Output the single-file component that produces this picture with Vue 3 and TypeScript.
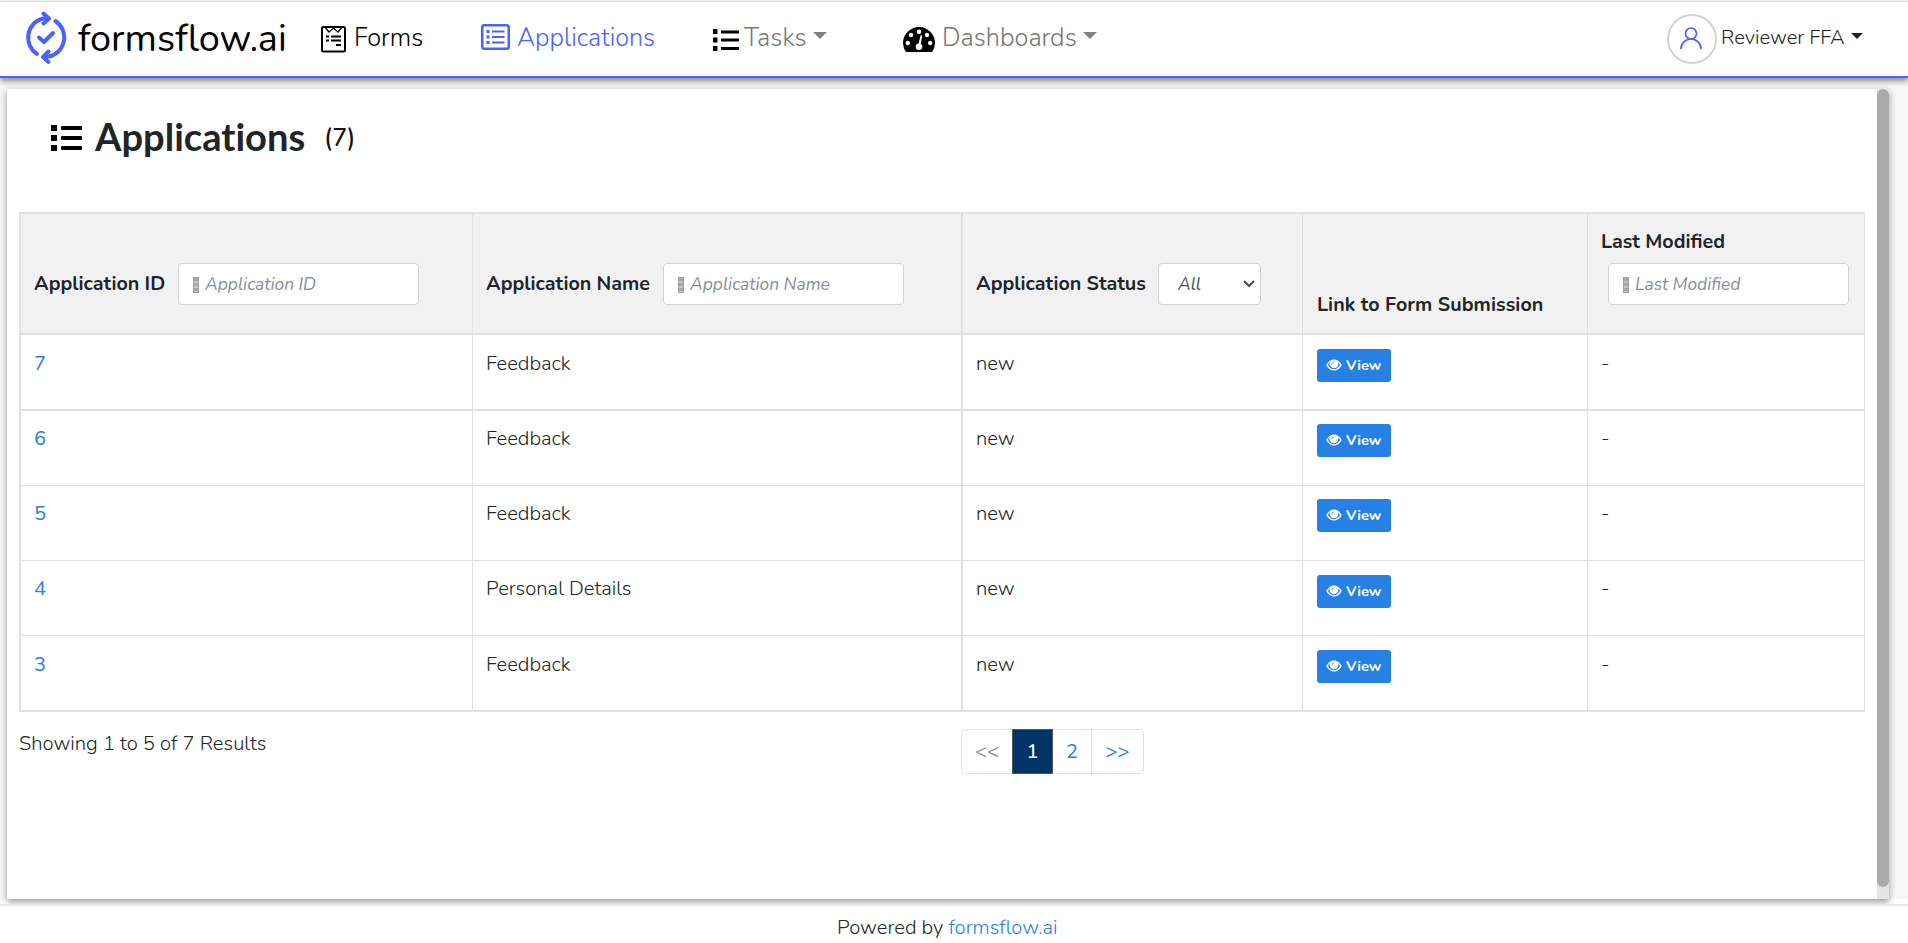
<script setup lang="ts">
interface Row {
  id: number
  name: string
  status: string
}

const rows: Row[] = [
  { id: 7, name: 'Feedback', status: 'new' },
  { id: 6, name: 'Feedback', status: 'new' },
  { id: 5, name: 'Feedback', status: 'new' },
  { id: 4, name: 'Personal Details', status: 'new' },
  { id: 3, name: 'Feedback', status: 'new' },
]
</script>

<template>
  <div class="page">
    <header class="navbar">
      <a class="brand">
        <svg class="logo" viewBox="0 0 42 54" width="42" height="54" fill="none" stroke="#4a63ff" stroke-width="4" stroke-linecap="round" stroke-linejoin="round">
          <path d="M12 43 A19 19.5 0 0 1 18 7.5 H23" />
          <path d="M18.500 2.500 L24 7.500 L18.500 12.500" />
          <path d="M30.500 10 A19 19.500 0 0 1 24 45.500 H19" />
          <path d="M23.500 40.500 L18 46 L23.500 51" />
          <path d="M14 26.500 L19 31 L28 22" />
        </svg>
        <span class="brand-text">formsflow.ai</span>
      </a>
      <nav class="menu">
        <a class="item forms">
          <svg viewBox="0 0 25 27" width="25" height="27" fill="none" stroke="#000">
            <rect x="1" y="1" width="23" height="24.500" rx="1.500" stroke-width="2" />
            <path d="M4.500 2 L8 6 L12.500 2 L17 6 L20.500 2" stroke-width="1.300" />
            <path d="M5 10.500h3M10 10.500h10M5 14.500h3M10 14.500h10M15 19h5" stroke-width="2" />
          </svg>
          <span>Forms</span>
        </a>
        <a class="item apps">
          <svg viewBox="0 0 29 26" width="29" height="26" fill="none" stroke="#4a63ff">
            <rect x="1.250" y="1.250" width="26.500" height="23.500" rx="2" stroke-width="2.500" />
            <path d="M5.500 7.500h3M5.500 13h3M5.500 18.500h3" stroke-width="3" />
            <path d="M11 7.500h12.500M11 13h12.500M11 18.500h12.500" stroke-width="2.200" />
          </svg>
          <span>Applications</span>
        </a>
        <a class="item tasks">
          <svg viewBox="0 0 26 22" width="26" height="22">
            <path d="M0 0h4.500v5H0zM0 8.500h4.500v5H0zM0 17h4.500v5H0zM8 1.500h18v3H8zM8 9.500h18v3H8zM8 18h18v3H8z" />
          </svg>
          <span>Tasks</span>
          <i class="caret" />
        </a>
        <a class="item dash">
          <svg viewBox="0 0 32 25" width="32" height="25">
            <path d="M3 25 Q0 21 0 16 A16 16 0 0 1 32 16 Q32 21 29 25Z" />
            <g fill="#fff">
              <circle cx="16" cy="4.700" r="2.200" /><circle cx="8" cy="8" r="2.200" /><circle cx="24" cy="8" r="2.200" />
              <circle cx="4.800" cy="16" r="2.200" /><circle cx="27.200" cy="16" r="2.200" /><circle cx="16" cy="19.700" r="3.300" />
              <path d="M17.700 8.300 L19.300 8.700 L17.200 19 L15 18.500Z" />
            </g>
          </svg>
          <span>Dashboards</span>
          <i class="caret" />
        </a>
      </nav>
      <a class="user">
        <span class="avatar">
          <svg viewBox="0 0 22 22" width="22" height="22" fill="none" stroke="#4a63ff" stroke-width="1.700">
            <circle cx="11" cy="6.500" r="5.500" />
            <path d="M1 22 A10 10 0 0 1 21 22" />
          </svg>
        </span>
        <span class="user-name">Reviewer FFA</span>
        <i class="caret small" />
      </a>
    </header>

    <div class="stage">
      <main class="panel">
        <section class="content">
          <div class="title">
            <svg viewBox="0 0 31 26" width="31" height="26">
              <path d="M0 0h6v6H0zM0 10h6v6H0zM0 20h6v6H0z" />
              <rect x="10" y="1" width="21" height="4" rx="1" /><rect x="10" y="11" width="21" height="4" rx="1" /><rect x="10" y="21" width="21" height="4" rx="1" />
            </svg>
            <h1>Applications</h1>
            <span class="count">(7)</span>
          </div>

          <table>
            <colgroup>
              <col class="c1"><col class="c2"><col class="c3"><col class="c4"><col class="c5">
            </colgroup>
            <thead>
              <tr>
                <th><div class="filter"><span class="t1">Application ID</span><span class="input"><i class="glyph" /><em>Application ID</em></span></div></th>
                <th><div class="filter"><span class="t2">Application Name</span><span class="input"><i class="glyph" /><em>Application Name</em></span></div></th>
                <th>
                  <div class="filter">
                    <span class="t3">Application Status</span>
                    <span class="select">
                      <em>All</em>
                      <svg viewBox="0 0 12 8" width="12" height="8" fill="none" stroke="#495057" stroke-width="2"><path d="M1 1 L6 6 L11 1" /></svg>
                    </span>
                  </div>
                </th>
                <th><div class="filter low"><span>Link to Form Submission</span></div></th>
                <th><div class="filter stacked"><span>Last Modified</span><span class="input"><i class="glyph" /><em>Last Modified</em></span></div></th>
              </tr>
            </thead>
            <tbody>
              <tr v-for="row in rows" :key="row.id">
                <td><a>{{ row.id }}</a></td>
                <td>{{ row.name }}</td>
                <td>{{ row.status }}</td>
                <td>
                  <button class="view">
                    <svg viewBox="0 0 16 12" width="16" height="12">
                      <path d="M8 .5C4.500 .5 1.700 3 .3 6 1.700 9 4.500 11.500 8 11.500S14.300 9 15.700 6C14.300 3 11.500 .5 8 .5Z" fill="#fff" />
                      <path d="M4 2.700A4.400 4.400 0 0 0 2 6C3.300 8.600 5.500 10.200 8 10.200S12.700 8.600 14 6A7 7 0 0 0 12 2.900 4.400 4.400 0 0 1 8 9.200 4.400 4.400 0 0 1 4 2.700Z" fill="#2780e3" />
                      <path d="M5.800 5.300A2.300 2.300 0 0 1 8 3.100" fill="none" stroke="#2780e3" stroke-width=".7" />
                    </svg>
                    <span>View</span>
                  </button>
                </td>
                <td>-</td>
              </tr>
            </tbody>
          </table>

          <div class="below">
            <span class="showing">Showing 1 to 5 of 7 Results</span>
            <div class="pager">
              <a class="pg first">&lt;&lt;</a>
              <a class="pg active">1</a>
              <a class="pg two">2</a>
              <a class="pg last">&gt;&gt;</a>
            </div>
          </div>
        </section>
        <div class="track"><div class="thumb" /></div>
      </main>
    </div>

    <footer><span>Powered by <a>formsflow.ai</a></span></footer>
  </div>
</template>

<style>
body {
  margin: 0;
  overflow: hidden;
}
</style>

<style scoped>
* { box-sizing: border-box; }
.page {
  width: 1908px;
  height: 943px;
  padding-top: 1px;
  display: flex;
  flex-direction: column;
  overflow: hidden;
  background: #fff;
  color: #212529;
  font: 365 20.200px/30px Nunito, Lato, sans-serif;
  white-space: nowrap;
}
.navbar {
  position: relative;
  z-index: 1;
  flex: none;
  height: 77px;
  display: flex;
  align-items: flex-start;
  border-top: 1px solid #dcdcdc;
  border-bottom: 2px solid #4a63ff;
  background: #fff;
  box-shadow: 0 3px 6px rgba(0, 0, 0, .45);
}
.brand { display: flex; width: 321px; padding-left: 25px; }
.logo { margin-top: 9px; flex: none; }
.brand-text { margin: 15px 0 0 11px; font-size: 37.800px; font-weight: 400; line-height: 44px; color: #000; }
.menu { display: flex; flex: 1; }
.item { display: flex; font-size: 25.300px; font-weight: 300; line-height: 30px; padding-top: 20px; color: #787878; }
.item svg { flex: none; }
.item span { padding-top: 1px; }
.forms { width: 159px; color: #000; }
.forms svg { margin: 4px 8px 0 0; }
.apps { width: 232px; color: #4a63ff; }
.apps svg { margin: 2px 7px 0 1px; }
.apps span { font-size: 25.100px; }
.tasks { width: 190px; }
.tasks svg { margin: 7px 5px 0 1px; }
.tasks span { width: 69px; }
.dash svg { margin: 5px 7px 0 1px; }
.dash span { width: 141px; }
.caret {
  width: 0;
  height: 0;
  margin-top: 10px;
  border: 7px solid transparent;
  border-top-color: #808080;
  border-bottom: 0;
}
.caret.small { margin: 31px 0 0 6px; border-width: 6px 6px 0; border-top-color: #212529; }
.user { display: flex; width: 241px; }
.avatar {
  width: 50px;
  height: 50px;
  margin-top: 12px;
  flex: none;
  border: 2px solid #d3d3d3;
  border-radius: 50%;
  display: grid;
  place-items: center;
}
.avatar svg { margin: 0 2px 2px 0; }
.user-name { width: 124px; margin: 21px 0 0 4px; }

.stage { flex: none; height: 821px; padding: 11px 0 0 7px; background: #f7f7f7; }
.panel {
  width: 1882px;
  height: 810px;
  display: flex;
  background: #fff;
  box-shadow: 0 3px 7px rgba(0, 0, 0, .4);
}
.content { flex: 1; padding: 32px 0 0 12px; }
.title { display: flex; height: 91px; padding-left: 32px; }
.title svg { margin-top: 4px; }
h1 { width: 230px; margin: -9px 0 0 13px; font: 700 38.100px/48px Lato, sans-serif; font-variant-ligatures: none; }
.count { margin-left: -1px; font-size: 25px; line-height: 34px; font-weight: 500; color: #111; }

table {
  width: 1846px;
  table-layout: fixed;
  border-collapse: separate;
  border-spacing: 0;
  border: 2px solid #dee2e6;
  border-width: 2px 1px 1px 2px;
}
.c1 { width: 452px; }
.c2 { width: 490px; }
.c3 { width: 340px; }
.c4 { width: 285px; }
.c5 { width: 276px; }
th, td {
  padding: 0;
  text-align: left;
  vertical-align: top;
  border-right: 1px solid #dee2e6;
  border-bottom: 1px solid #dee2e6;
}
th:nth-child(2), td:nth-child(2) { border-right-width: 2px; }
th:last-child, td:last-child { border-right: 0; }
th { height: 121px; background: #f1f1f1; border-bottom-width: 2px; font-size: 19.700px; font-weight: 700; }
.filter { display: flex; padding: 49px 0 0 13px; line-height: 42px; }
.filter.low { padding: 70px 0 0 14px; letter-spacing: .06px; }
.filter.stacked { flex-direction: column; padding-top: 13px; line-height: 30px; }
.stacked .input { margin: 6px 0 0 7px; }
.t1 { width: 144px; }
.t2 { width: 177px; }
.t3 { width: 182px; }
.input, .select {
  width: 241px;
  height: 42px;
  flex: none;
  display: flex;
  align-items: center;
  border: 1px solid #ced4da;
  border-radius: 4px;
  background: #fff;
  padding-left: 14px;
  color: #868e96;
  font-weight: 370;
  font-size: 17.400px;
}
.glyph {
  width: 6px;
  height: 16px;
  margin: 2px 6px 0 0;
  border: 1px solid #9aa0a6;
  background: repeating-linear-gradient(#a3a9ae 0 3px, #c3c7ca 3px 5px);
}
.select { width: 103px; padding: 0 5px 0 19px; justify-content: space-between; color: #495057; }
td { height: 75px; padding: 13px 0 0 13px; }
tr:first-child td { height: 76px; padding-top: 14px; border-bottom-width: 2px; }
tr:last-child td { padding-top: 14px; }
tr:nth-child(4) .view { margin-top: 1px; }
td:nth-child(4) { padding-left: 14px; }
td a, footer a { color: #2780e3; }
td a, .pg { font-weight: 400; font-size: 20px; }
.view {
  display: flex;
  align-items: center;
  width: 74px;
  height: 33px;
  padding: 0 0 1px 9px;
  border: 0;
  border-radius: 3px;
  background: #2780e3;
  color: #fff;
  font: 700 14.700px/22px Nunito, Lato, sans-serif;
}
.view svg { margin-right: 4px; }
.below { display: flex; padding-top: 16px; }
.showing { width: 942px; padding-top: 1px; }
.pager { display: flex; height: 45px; margin-top: 1px; }
.pg { height: 45px; line-height: 43px; text-align: center; border: 1px solid #dee2e6; color: #2780e3; }
.first { width: 51px; border-right: 0; border-radius: 5px 0 0 5px; color: #868e96; }
.active { width: 41px; border-color: #555; background: #036; color: #fff; font-weight: 500; }
.two { width: 39px; border-left: 0; }
.last { width: 52px; border-left: 0; border-radius: 0 5px 5px 0; }
.track { width: 12px; background: #e4e4e4; }
.thumb { height: 798px; border-radius: 6px; background: #ababab; }
footer {
  position: relative;
  z-index: 2;
  flex: none;
  height: 39px;
  margin-top: 5px;
  border-top: 2px solid #e8e8ee;
  padding: 7px 0 0 837px;
  display: flex;
  background: #fff;
}
</style>
